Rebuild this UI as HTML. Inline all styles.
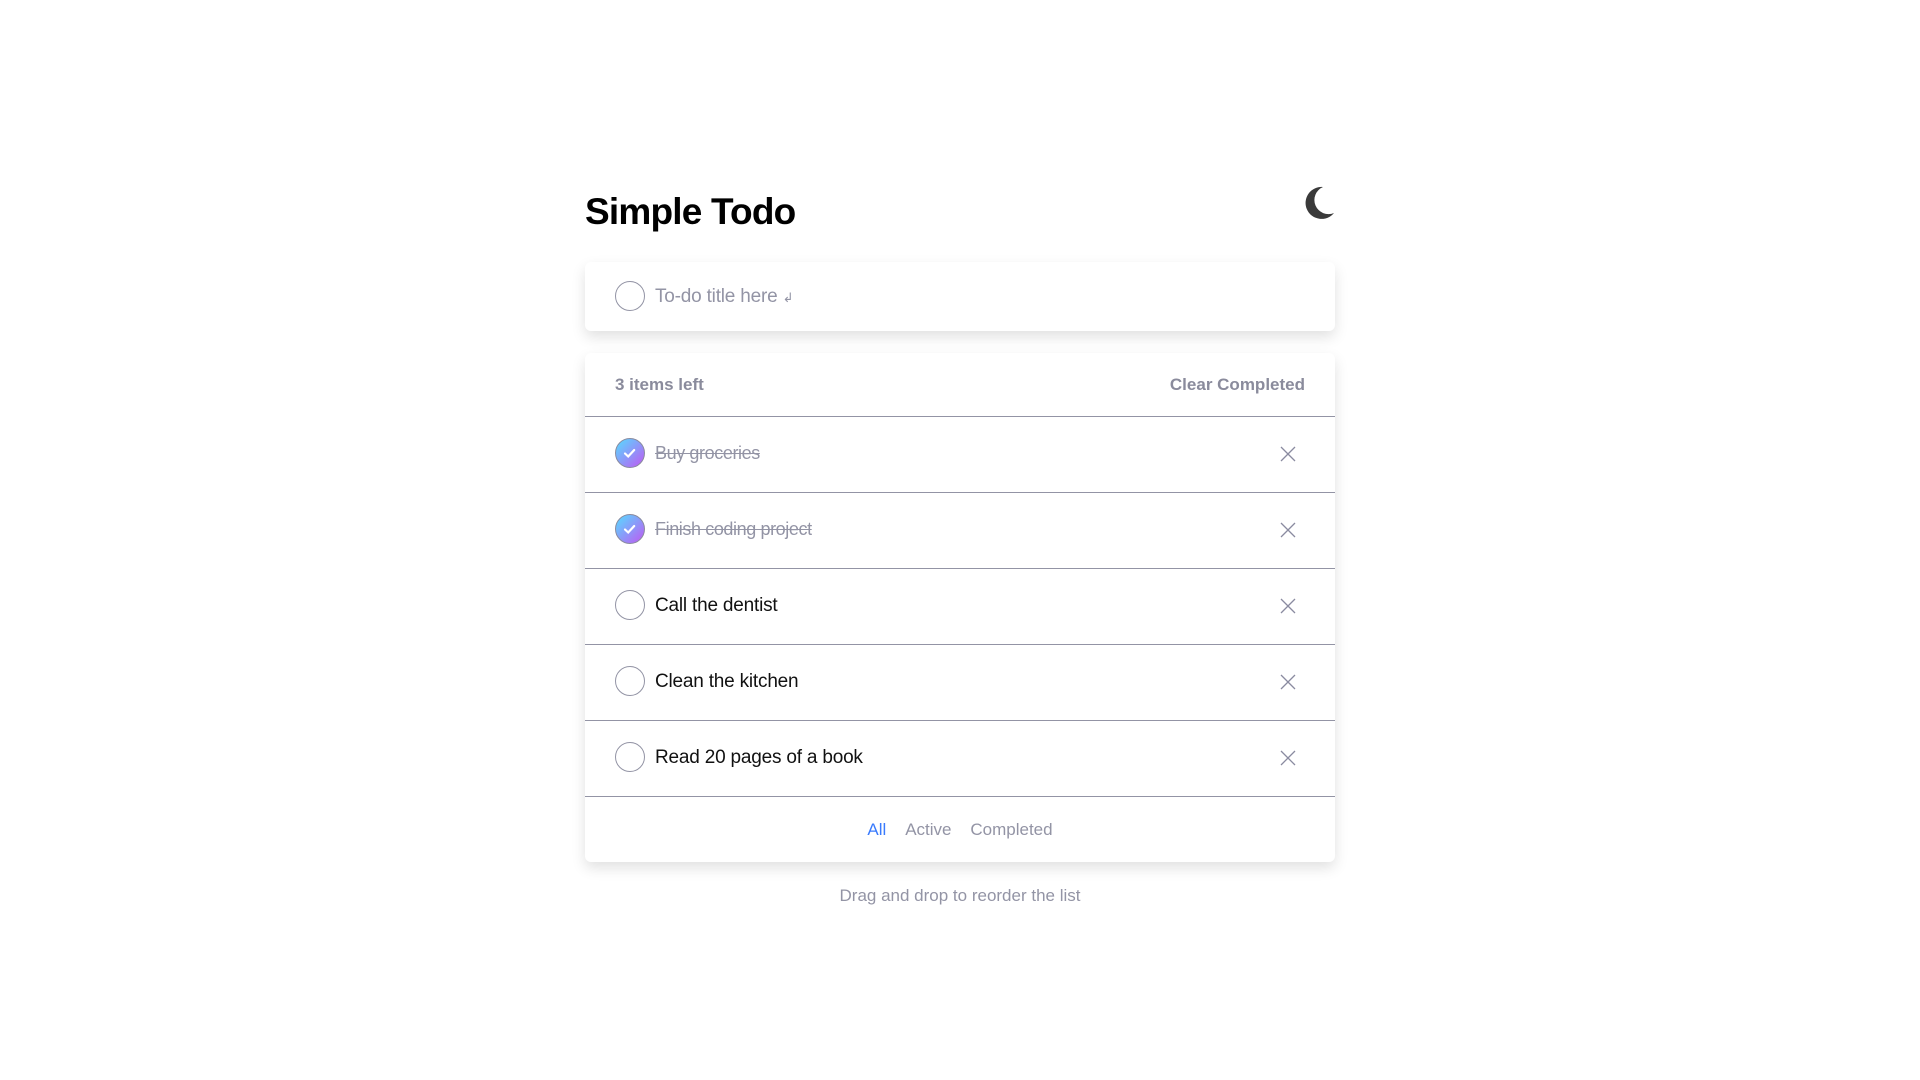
<!DOCTYPE html>
<html><head><meta charset="utf-8"><style>
*{box-sizing:border-box;margin:0;padding:0}
body{width:1920px;height:1080px;background:#fff;font-family:"Liberation Sans",sans-serif;position:relative;overflow:hidden}
h1{position:absolute;left:585px;top:191px;font-size:37px;font-weight:bold;color:#000;letter-spacing:-0.8px}
.moon{position:absolute;left:1303px;top:186px}
.card{position:absolute;left:585px;width:750px;background:#fff;border-radius:6px;box-shadow:0 6px 14px rgba(0,0,0,0.12)}
.circ{position:absolute;left:30px;width:30px;height:30px;border-radius:50%;border:1.5px solid #9394a5}
.chk{border:1.5px solid #8a8ba0;background:linear-gradient(135deg,#55ddff,#c058f3)}
.row{position:absolute;left:0;width:750px;height:76px;border-top:1.5px solid #9394a5}
.row .circ{top:21px}
.row .t{position:absolute;left:70px;top:26px;font-size:19px;color:#111;letter-spacing:-0.2px}
.row .t.done{color:#9394a5;text-decoration:line-through;font-size:18px;letter-spacing:-0.4px}
.row svg.x{position:absolute;left:279px}
.row svg.x{left:695px;top:29px}
.gray{color:#9394a5}
</style></head><body>
<h1>Simple Todo</h1>
<svg class="moon" width="32" height="34" viewBox="0 0 32 34"><path d="M20 1 A16 16 0 1 0 31 27 A14 14 0 0 1 20 1Z" fill="#3a3a3a"/></svg>
<div class="card" style="top:262px;height:69px">
<div class="circ" style="top:19px"></div>
<div class="gray" style="position:absolute;left:70px;top:24px;font-size:19px;letter-spacing:-0.2px">To-do title here <span style="font-size:13px">↲</span></div>
</div>
<div class="card" style="top:353px;height:509px">
<div class="gray" style="position:absolute;left:30px;top:22px;font-size:17px;font-weight:bold;color:#8a8b9c">3 items left</div>
<div class="gray" style="position:absolute;right:30px;top:22px;font-size:17px;font-weight:bold;color:#8a8b9c">Clear Completed</div>
<div class="row" style="top:63px"><div class="circ chk"><svg width="28" height="28" viewBox="0 0 28 28" style="position:absolute;left:-0.5px;top:-0.5px"><path d="M9 14.5l3.2 3 6-6.5" stroke="#fff" stroke-width="2.2" fill="none" stroke-linecap="round"/></svg></div><div class="t done">Buy groceries</div><svg class="x" width="16" height="16"><path d="M1 1L15 15M15 1L1 15" stroke="#8a8ba0" stroke-width="1.3"/></svg></div>
<div class="row" style="top:139px"><div class="circ chk"><svg width="28" height="28" viewBox="0 0 28 28" style="position:absolute;left:-0.5px;top:-0.5px"><path d="M9 14.5l3.2 3 6-6.5" stroke="#fff" stroke-width="2.2" fill="none" stroke-linecap="round"/></svg></div><div class="t done">Finish coding project</div><svg class="x" width="16" height="16"><path d="M1 1L15 15M15 1L1 15" stroke="#8a8ba0" stroke-width="1.3"/></svg></div>
<div class="row" style="top:215px"><div class="circ"></div><div class="t">Call the dentist</div><svg class="x" width="16" height="16"><path d="M1 1L15 15M15 1L1 15" stroke="#8a8ba0" stroke-width="1.3"/></svg></div>
<div class="row" style="top:291px"><div class="circ"></div><div class="t">Clean the kitchen</div><svg class="x" width="16" height="16"><path d="M1 1L15 15M15 1L1 15" stroke="#8a8ba0" stroke-width="1.3"/></svg></div>
<div class="row" style="top:367px"><div class="circ"></div><div class="t">Read 20 pages of a book</div><svg class="x" width="16" height="16"><path d="M1 1L15 15M15 1L1 15" stroke="#8a8ba0" stroke-width="1.3"/></svg></div>
<div class="row" style="top:443px;height:66px"><div style="position:absolute;left:0;width:750px;top:23px;text-align:center;font-size:17px" class="gray"><span style="color:#3a7bfd">All</span>&nbsp;&nbsp;&nbsp;&nbsp;Active&nbsp;&nbsp;&nbsp;&nbsp;Completed</div></div>
</div>
<div class="gray" style="position:absolute;left:585px;width:750px;top:886px;text-align:center;font-size:17px">Drag and drop to reorder the list</div>
</body></html>
